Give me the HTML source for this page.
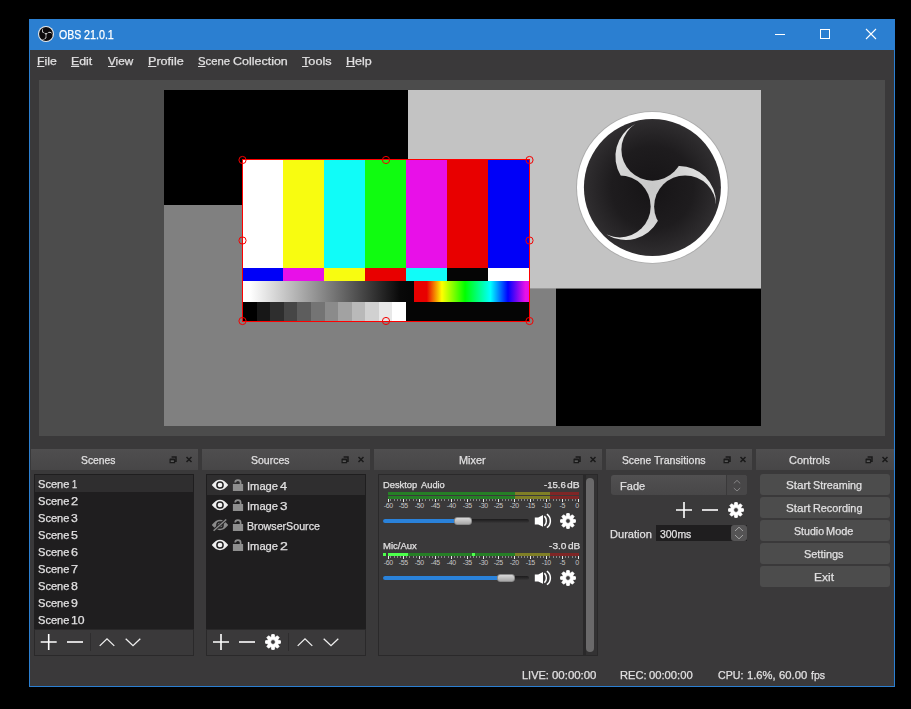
<!DOCTYPE html>
<html><head><meta charset="utf-8"><title>OBS</title>
<style>
*{margin:0;padding:0;box-sizing:border-box}
html,body{width:911px;height:709px;background:#000;overflow:hidden}
body{position:relative;font-family:"Liberation Sans",sans-serif;color:#e1e0e1;font-size:12px}
.a{position:absolute}
.t{position:absolute;white-space:pre;line-height:16px;height:16px;transform-origin:0 0;-webkit-text-stroke:0.25px}
.t u{text-decoration:underline;text-underline-offset:1px}
.dk{position:absolute;top:449px;height:21px;background:linear-gradient(180deg,#4f4e4f,#474647)}
.lb{position:absolute;background:#1f1e1f}
.tb{position:absolute;background:#3a393a;border:1px solid #2a292a}
.btn{position:absolute;left:760px;width:130px;height:21px;background:#4c4c4c;border-radius:3px}
svg{position:absolute;overflow:visible}

</style></head><body>
<div class="a" style="left:29px;top:19px;width:866px;height:668px;background:#3a393a;border:1px solid #2b7fd1"></div>
<div class="a" style="left:29px;top:19px;width:866px;height:31px;background:#2b7fd1"></div>
<svg style="left:38px;top:26px" width="16" height="16" viewBox="-76 -76 152 152"><circle r="76" fill="#e8e8e8"/><circle r="66" fill="#0c0a0c"/><mask id="m1" maskUnits="userSpaceOnUse" x="-80" y="-80" width="160" height="160"><path d="M-31.33 -11.47A36.50 36.50 0 0 1 -12.88 -65.34L25.60 -21.40A36.50 36.50 0 0 1 63.02 21.51L5.74 32.87A36.50 36.50 0 0 1 -50.14 43.82Z" fill="#fff"/><circle cx="0.00" cy="-37.80" r="30.40" fill="#000"/><circle cx="32.74" cy="18.90" r="30.40" fill="#000"/><circle cx="-32.74" cy="18.90" r="30.40" fill="#000"/></mask><rect x="-80" y="-80" width="160" height="160" fill="#f4f4f4" mask="url(#m1)"/></svg>
<svg style="left:776px;top:19px" width="118" height="31"><path d="M-1 15.5h10" stroke="#fff" stroke-width="1" fill="none"/><rect x="44.5" y="10.5" width="9" height="9" fill="none" stroke="#fff"/><path d="M90 10l10 10M100 10l-10 10" stroke="#fff" stroke-width="1.1" fill="none"/></svg>
<div class="a" style="left:39px;top:80px;width:846px;height:356px;background:#4c4c4c"></div>
<div class="a" style="left:164px;top:90px;width:597px;height:336px;background:#808080"></div>
<div class="a" style="left:164px;top:90px;width:244px;height:115px;background:#000"></div>
<div class="a" style="left:408px;top:90px;width:353px;height:198px;background:#c3c3c3"></div>
<div class="a" style="left:556px;top:288px;width:205px;height:138px;background:#000"></div>
<div class="a" style="left:408px;top:288px;width:148px;height:1px;background:#9a9a9a"></div>
<div class="a" style="left:556px;top:288px;width:205px;height:1px;background:#6c6c6c"></div>
<div class="a" style="left:242px;top:160px;width:41px;height:108px;background:#ffffff"></div>
<div class="a" style="left:283px;top:160px;width:41px;height:108px;background:#f8fc10"></div>
<div class="a" style="left:324px;top:160px;width:41px;height:108px;background:#10fcf8"></div>
<div class="a" style="left:365px;top:160px;width:41px;height:108px;background:#10fc10"></div>
<div class="a" style="left:406px;top:160px;width:41px;height:108px;background:#e810e8"></div>
<div class="a" style="left:447px;top:160px;width:41px;height:108px;background:#e80000"></div>
<div class="a" style="left:488px;top:160px;width:41px;height:108px;background:#0000f8"></div>
<div class="a" style="left:242px;top:268px;width:41px;height:13px;background:#0000f8"></div>
<div class="a" style="left:283px;top:268px;width:41px;height:13px;background:#e810e8"></div>
<div class="a" style="left:324px;top:268px;width:41px;height:13px;background:#f8fc10"></div>
<div class="a" style="left:365px;top:268px;width:41px;height:13px;background:#e80000"></div>
<div class="a" style="left:406px;top:268px;width:41px;height:13px;background:#10fcf8"></div>
<div class="a" style="left:447px;top:268px;width:41px;height:13px;background:#050505"></div>
<div class="a" style="left:488px;top:268px;width:41px;height:13px;background:#ffffff"></div>
<div class="a" style="left:243px;top:281px;width:287px;height:21px;background:#050505"></div>
<div class="a" style="left:243px;top:281px;width:171px;height:21px;background:linear-gradient(90deg,#fff 0%,#fff 4%,#080808 92%,#050505 100%)"></div>
<div class="a" style="left:414px;top:281px;width:116px;height:21px;background:linear-gradient(90deg,#e80000 0%,#e80000 11%,#ffff00 24%,#00ff00 44%,#00ffff 66%,#0000ff 81%,#e810e8 96%,#e810e8 100%)"></div>
<div class="a" style="left:243px;top:302px;width:287px;height:19px;background:#050505"></div>
<div class="a" style="left:243.00px;top:302px;width:13.88px;height:19px;background:rgb(0,0,0)"></div>
<div class="a" style="left:256.58px;top:302px;width:13.88px;height:19px;background:rgb(23,23,23)"></div>
<div class="a" style="left:270.17px;top:302px;width:13.88px;height:19px;background:rgb(46,46,46)"></div>
<div class="a" style="left:283.75px;top:302px;width:13.88px;height:19px;background:rgb(70,70,70)"></div>
<div class="a" style="left:297.33px;top:302px;width:13.88px;height:19px;background:rgb(93,93,93)"></div>
<div class="a" style="left:310.92px;top:302px;width:13.88px;height:19px;background:rgb(116,116,116)"></div>
<div class="a" style="left:324.50px;top:302px;width:13.88px;height:19px;background:rgb(139,139,139)"></div>
<div class="a" style="left:338.08px;top:302px;width:13.88px;height:19px;background:rgb(162,162,162)"></div>
<div class="a" style="left:351.67px;top:302px;width:13.88px;height:19px;background:rgb(185,185,185)"></div>
<div class="a" style="left:365.25px;top:302px;width:13.88px;height:19px;background:rgb(209,209,209)"></div>
<div class="a" style="left:378.83px;top:302px;width:13.88px;height:19px;background:rgb(232,232,232)"></div>
<div class="a" style="left:392.42px;top:302px;width:13.88px;height:19px;background:rgb(255,255,255)"></div>
<svg style="left:0;top:0" width="911" height="709"><rect x="242.5" y="159.5" width="287" height="162" fill="none" stroke="#ff0000" stroke-width="1"/><circle cx="242.5" cy="160" r="3.6" fill="none" stroke="#f40000" stroke-width="1"/><circle cx="386" cy="160" r="3.6" fill="none" stroke="#f40000" stroke-width="1"/><circle cx="529.5" cy="160" r="3.6" fill="none" stroke="#f40000" stroke-width="1"/><circle cx="242.5" cy="240.5" r="3.6" fill="none" stroke="#f40000" stroke-width="1"/><circle cx="529.5" cy="240.5" r="3.6" fill="none" stroke="#f40000" stroke-width="1"/><circle cx="242.5" cy="321" r="3.6" fill="none" stroke="#f40000" stroke-width="1"/><circle cx="386" cy="321" r="3.6" fill="none" stroke="#f40000" stroke-width="1"/><circle cx="529.5" cy="321" r="3.6" fill="none" stroke="#f40000" stroke-width="1"/></svg>
<svg style="left:0;top:0" width="911" height="709"><defs><radialGradient id="lg" cx="0.5" cy="0.5" r="0.5"><stop offset="0" stop-color="#161416"/><stop offset="0.6" stop-color="#1e1c1e"/><stop offset="1" stop-color="#302e30"/></radialGradient><radialGradient id="sg2" gradientUnits="userSpaceOnUse" cx="0" cy="0" r="68"><stop offset="0" stop-color="#c8c8c8"/><stop offset="0.5" stop-color="#d4d4d4"/><stop offset="1" stop-color="#ececec"/></radialGradient></defs><g transform="translate(652.4,187.5)"><circle r="76.3" fill="#aaaaaa"/><circle r="75.4" fill="#ffffff"/><circle r="68.5" fill="url(#lg)"/><mask id="m2" maskUnits="userSpaceOnUse" x="-80" y="-80" width="160" height="160"><path d="M-31.72 -12.08A36.50 36.50 0 0 1 -18.05 -63.01L26.32 -21.42A36.50 36.50 0 0 1 63.59 15.88L5.39 33.51A36.50 36.50 0 0 1 -45.54 47.13Z" fill="#fff"/><circle cx="0.00" cy="-37.80" r="31.00" fill="#000"/><circle cx="32.74" cy="18.90" r="31.00" fill="#000"/><circle cx="-32.74" cy="18.90" r="31.00" fill="#000"/></mask><rect x="-80" y="-80" width="160" height="160" fill="url(#sg2)" mask="url(#m2)"/></g></svg>
<div class="dk" style="left:31px;width:167px"></div>
<svg style="left:0;top:0" width="911" height="709"><g fill="none" stroke="#1a1a1a" stroke-width="1.2"><path d="M171.6 457h4.4v4.2h-1.2" stroke-width="1.5"/><path d="M170.1 459.4h4.4v3.3h-4.4z" fill="#5c5c5c"/><path d="M170.1 459.5h4.4" stroke-width="1.7"/><path d="M186.5 457l5 5M191.5 457l-5 5" stroke-width="1.5"/></g></svg>
<div class="dk" style="left:202px;width:168px"></div>
<svg style="left:0;top:0" width="911" height="709"><g fill="none" stroke="#1a1a1a" stroke-width="1.2"><path d="M343.6 457h4.4v4.2h-1.2" stroke-width="1.5"/><path d="M342.1 459.4h4.4v3.3h-4.4z" fill="#5c5c5c"/><path d="M342.1 459.5h4.4" stroke-width="1.7"/><path d="M358.5 457l5 5M363.5 457l-5 5" stroke-width="1.5"/></g></svg>
<div class="dk" style="left:374px;width:228px"></div>
<svg style="left:0;top:0" width="911" height="709"><g fill="none" stroke="#1a1a1a" stroke-width="1.2"><path d="M575.6 457h4.4v4.2h-1.2" stroke-width="1.5"/><path d="M574.1 459.4h4.4v3.3h-4.4z" fill="#5c5c5c"/><path d="M574.1 459.5h4.4" stroke-width="1.7"/><path d="M590.5 457l5 5M595.5 457l-5 5" stroke-width="1.5"/></g></svg>
<div class="dk" style="left:606px;width:146px"></div>
<svg style="left:0;top:0" width="911" height="709"><g fill="none" stroke="#1a1a1a" stroke-width="1.2"><path d="M725.6 457h4.4v4.2h-1.2" stroke-width="1.5"/><path d="M724.1 459.4h4.4v3.3h-4.4z" fill="#5c5c5c"/><path d="M724.1 459.5h4.4" stroke-width="1.7"/><path d="M740.5 457l5 5M745.5 457l-5 5" stroke-width="1.5"/></g></svg>
<div class="dk" style="left:756px;width:138px"></div>
<svg style="left:0;top:0" width="911" height="709"><g fill="none" stroke="#1a1a1a" stroke-width="1.2"><path d="M867.6 457h4.4v4.2h-1.2" stroke-width="1.5"/><path d="M866.1 459.4h4.4v3.3h-4.4z" fill="#5c5c5c"/><path d="M866.1 459.5h4.4" stroke-width="1.7"/><path d="M882.5 457l5 5M887.5 457l-5 5" stroke-width="1.5"/></g></svg>
<div class="lb" style="left:34px;top:474px;width:160px;height:155px"></div>
<div class="a" style="left:35px;top:475px;width:158px;height:17px;background:#2f2e2f"></div>
<div class="tb" style="left:34px;top:629px;width:160px;height:27px"></div>
<div class="lb" style="left:206px;top:474px;width:160px;height:155px"></div>
<div class="a" style="left:207px;top:475px;width:158px;height:20px;background:#2f2e2f"></div>
<div class="tb" style="left:206px;top:629px;width:160px;height:27px"></div>
<svg style="left:0;top:0" width="911" height="709"><path d="M40.7 642h16M48.7 634v16" stroke="#fff" stroke-width="1.6" fill="none"/><path d="M67 642h16" stroke="#fff" stroke-width="1.6" fill="none"/><path d="M90.5 633v18" stroke="#2e2d2e" stroke-width="1"/><path d="M99.7 645.9l7.3 -7 7.3 7" stroke="#f0f0f0" stroke-width="1.3" fill="none"/><path d="M125.7 638.7l7.3 7 7.3 -7" stroke="#f0f0f0" stroke-width="1.3" fill="none"/><path d="M213 642h16M221 634v16" stroke="#fff" stroke-width="1.6" fill="none"/><path d="M239 642h16" stroke="#fff" stroke-width="1.6" fill="none"/><path d="M271.25 636.89L271.75 634.50L274.25 634.50L274.75 636.89L275.38 637.15L277.42 635.82L279.18 637.58L277.85 639.62L278.11 640.25L280.50 640.75L280.50 643.25L278.11 643.75L277.85 644.38L279.18 646.42L277.42 648.18L275.38 646.85L274.75 647.11L274.25 649.50L271.75 649.50L271.25 647.11L270.62 646.85L268.58 648.18L266.82 646.42L268.15 644.38L267.89 643.75L265.50 643.25L265.50 640.75L267.89 640.25L268.15 639.62L266.82 637.58L268.58 635.82L270.62 637.15ZM270.60 642.00a2.40 2.40 0 1 0 4.80 0a2.40 2.40 0 1 0 -4.80 0Z" fill="#fff" fill-rule="evenodd" stroke="#fff" stroke-width="0.8" stroke-linejoin="round"/><path d="M288.5 633v18" stroke="#2e2d2e" stroke-width="1"/><path d="M297.7 645.9l7.3 -7 7.3 7" stroke="#f0f0f0" stroke-width="1.3" fill="none"/><path d="M323.7 638.7l7.3 7 7.3 -7" stroke="#f0f0f0" stroke-width="1.3" fill="none"/><path d="M676 510h16M684 502v16" stroke="#fff" stroke-width="1.6" fill="none"/><path d="M702 510h16" stroke="#fff" stroke-width="1.6" fill="none"/><path d="M734.25 504.89L734.75 502.50L737.25 502.50L737.75 504.89L738.38 505.15L740.42 503.82L742.18 505.58L740.85 507.62L741.11 508.25L743.50 508.75L743.50 511.25L741.11 511.75L740.85 512.38L742.18 514.42L740.42 516.18L738.38 514.85L737.75 515.11L737.25 517.50L734.75 517.50L734.25 515.11L733.62 514.85L731.58 516.18L729.82 514.42L731.15 512.38L730.89 511.75L728.50 511.25L728.50 508.75L730.89 508.25L731.15 507.62L729.82 505.58L731.58 503.82L733.62 505.15ZM733.60 510.00a2.40 2.40 0 1 0 4.80 0a2.40 2.40 0 1 0 -4.80 0Z" fill="#fff" fill-rule="evenodd" stroke="#fff" stroke-width="0.8" stroke-linejoin="round"/></svg>
<svg style="left:0;top:0" width="911" height="709"><path d="M211.8 485q8.2 -10.4 16.4 0q-8.2 10.4 -16.4 0z" fill="#f0f0f0"/><circle cx="220" cy="485" r="3.1" fill="none" stroke="#242324" stroke-width="1.5"/><rect x="232.9" y="484" width="10.2" height="7" fill="#8e8e8e"/><path d="M235.2 482.5a2.7 2.4 0 0 1 5.4 0v2" fill="none" stroke="#8e8e8e" stroke-width="1.7"/><path d="M211.8 505q8.2 -10.4 16.4 0q-8.2 10.4 -16.4 0z" fill="#f0f0f0"/><circle cx="220" cy="505" r="3.1" fill="none" stroke="#242324" stroke-width="1.5"/><rect x="232.9" y="504" width="10.2" height="7" fill="#8e8e8e"/><path d="M235.2 502.5a2.7 2.4 0 0 1 5.4 0v2" fill="none" stroke="#8e8e8e" stroke-width="1.7"/><path d="M211.8 525q8.2 -10.4 16.4 0q-8.2 10.4 -16.4 0z" fill="#8a8a8a"/><circle cx="220" cy="525" r="3.1" fill="none" stroke="#242324" stroke-width="1.5"/><path d="M213.6 530.8L226.2 519.4" stroke="#242324" stroke-width="3.2"/><path d="M213.6 530.8L226.2 519.4" stroke="#8a8a8a" stroke-width="1.4"/><rect x="232.9" y="524" width="10.2" height="7" fill="#8e8e8e"/><path d="M235.2 522.5a2.7 2.4 0 0 1 5.4 0v2" fill="none" stroke="#8e8e8e" stroke-width="1.7"/><path d="M211.8 545q8.2 -10.4 16.4 0q-8.2 10.4 -16.4 0z" fill="#f0f0f0"/><circle cx="220" cy="545" r="3.1" fill="none" stroke="#242324" stroke-width="1.5"/><rect x="232.9" y="544" width="10.2" height="7" fill="#8e8e8e"/><path d="M235.2 542.5a2.7 2.4 0 0 1 5.4 0v2" fill="none" stroke="#8e8e8e" stroke-width="1.7"/></svg>
<div class="a" style="left:378px;top:474px;width:220px;height:182px;border:1px solid #2a292a;background:#3a393a"></div>
<div class="a" style="left:583px;top:475px;width:14px;height:180px;background:linear-gradient(90deg,#2a292a 0,#2a292a 3px,#333233 3px,#333233 100%)"></div>
<div class="a" style="left:586px;top:478px;width:8px;height:174px;border-radius:4px;background:#6a696a"></div>
<svg style="left:0;top:0" width="911" height="709" shape-rendering="crispEdges"><rect x="388.00" y="492" width="127.00" height="3" fill="#267f26"/><rect x="515.00" y="492" width="35.00" height="3" fill="#7f7f26"/><rect x="550.00" y="492" width="29.00" height="3" fill="#7f2626"/><rect x="388.00" y="496" width="127.00" height="3" fill="#267f26"/><rect x="515.00" y="496" width="35.00" height="3" fill="#7f7f26"/><rect x="550.00" y="496" width="29.00" height="3" fill="#7f2626"/><rect x="388.00" y="553" width="127.00" height="3" fill="#267f26"/><rect x="515.00" y="553" width="35.00" height="3" fill="#7f7f26"/><rect x="550.00" y="553" width="29.00" height="3" fill="#7f2626"/><rect x="383.00" y="553" width="3.00" height="3" fill="#4cff4c"/><rect x="388.00" y="553" width="20.00" height="3" fill="#4cff4c"/><rect x="472.00" y="553" width="3.00" height="3" fill="#4cff4c"/><rect x="388" y="499" width="1" height="3" fill="#e8e8e8"/><rect x="390" y="499" width="1" height="2" fill="#8a8a8a"/><rect x="394" y="499" width="1" height="2" fill="#8a8a8a"/><rect x="397" y="499" width="1" height="2" fill="#8a8a8a"/><rect x="400" y="499" width="1" height="2" fill="#8a8a8a"/><rect x="403" y="499" width="1" height="3" fill="#e8e8e8"/><rect x="406" y="499" width="1" height="2" fill="#8a8a8a"/><rect x="409" y="499" width="1" height="2" fill="#8a8a8a"/><rect x="413" y="499" width="1" height="2" fill="#8a8a8a"/><rect x="416" y="499" width="1" height="2" fill="#8a8a8a"/><rect x="419" y="499" width="1" height="3" fill="#e8e8e8"/><rect x="422" y="499" width="1" height="2" fill="#8a8a8a"/><rect x="425" y="499" width="1" height="2" fill="#8a8a8a"/><rect x="429" y="499" width="1" height="2" fill="#8a8a8a"/><rect x="432" y="499" width="1" height="2" fill="#8a8a8a"/><rect x="435" y="499" width="1" height="3" fill="#e8e8e8"/><rect x="438" y="499" width="1" height="2" fill="#8a8a8a"/><rect x="441" y="499" width="1" height="2" fill="#8a8a8a"/><rect x="444" y="499" width="1" height="2" fill="#8a8a8a"/><rect x="448" y="499" width="1" height="2" fill="#8a8a8a"/><rect x="451" y="499" width="1" height="3" fill="#e8e8e8"/><rect x="454" y="499" width="1" height="2" fill="#8a8a8a"/><rect x="457" y="499" width="1" height="2" fill="#8a8a8a"/><rect x="460" y="499" width="1" height="2" fill="#8a8a8a"/><rect x="464" y="499" width="1" height="2" fill="#8a8a8a"/><rect x="467" y="499" width="1" height="3" fill="#e8e8e8"/><rect x="470" y="499" width="1" height="2" fill="#8a8a8a"/><rect x="473" y="499" width="1" height="2" fill="#8a8a8a"/><rect x="476" y="499" width="1" height="2" fill="#8a8a8a"/><rect x="479" y="499" width="1" height="2" fill="#8a8a8a"/><rect x="483" y="499" width="1" height="3" fill="#e8e8e8"/><rect x="486" y="499" width="1" height="2" fill="#8a8a8a"/><rect x="489" y="499" width="1" height="2" fill="#8a8a8a"/><rect x="492" y="499" width="1" height="2" fill="#8a8a8a"/><rect x="495" y="499" width="1" height="2" fill="#8a8a8a"/><rect x="498" y="499" width="1" height="3" fill="#e8e8e8"/><rect x="502" y="499" width="1" height="2" fill="#8a8a8a"/><rect x="505" y="499" width="1" height="2" fill="#8a8a8a"/><rect x="508" y="499" width="1" height="2" fill="#8a8a8a"/><rect x="511" y="499" width="1" height="2" fill="#8a8a8a"/><rect x="514" y="499" width="1" height="3" fill="#e8e8e8"/><rect x="518" y="499" width="1" height="2" fill="#8a8a8a"/><rect x="521" y="499" width="1" height="2" fill="#8a8a8a"/><rect x="524" y="499" width="1" height="2" fill="#8a8a8a"/><rect x="527" y="499" width="1" height="2" fill="#8a8a8a"/><rect x="530" y="499" width="1" height="3" fill="#e8e8e8"/><rect x="533" y="499" width="1" height="2" fill="#8a8a8a"/><rect x="537" y="499" width="1" height="2" fill="#8a8a8a"/><rect x="540" y="499" width="1" height="2" fill="#8a8a8a"/><rect x="543" y="499" width="1" height="2" fill="#8a8a8a"/><rect x="546" y="499" width="1" height="3" fill="#e8e8e8"/><rect x="549" y="499" width="1" height="2" fill="#8a8a8a"/><rect x="553" y="499" width="1" height="2" fill="#8a8a8a"/><rect x="556" y="499" width="1" height="2" fill="#8a8a8a"/><rect x="559" y="499" width="1" height="2" fill="#8a8a8a"/><rect x="562" y="499" width="1" height="3" fill="#e8e8e8"/><rect x="565" y="499" width="1" height="2" fill="#8a8a8a"/><rect x="568" y="499" width="1" height="2" fill="#8a8a8a"/><rect x="572" y="499" width="1" height="2" fill="#8a8a8a"/><rect x="575" y="499" width="1" height="2" fill="#8a8a8a"/><rect x="578" y="499" width="1" height="3" fill="#e8e8e8"/><rect x="388" y="556" width="1" height="3" fill="#e8e8e8"/><rect x="390" y="556" width="1" height="2" fill="#8a8a8a"/><rect x="394" y="556" width="1" height="2" fill="#8a8a8a"/><rect x="397" y="556" width="1" height="2" fill="#8a8a8a"/><rect x="400" y="556" width="1" height="2" fill="#8a8a8a"/><rect x="403" y="556" width="1" height="3" fill="#e8e8e8"/><rect x="406" y="556" width="1" height="2" fill="#8a8a8a"/><rect x="409" y="556" width="1" height="2" fill="#8a8a8a"/><rect x="413" y="556" width="1" height="2" fill="#8a8a8a"/><rect x="416" y="556" width="1" height="2" fill="#8a8a8a"/><rect x="419" y="556" width="1" height="3" fill="#e8e8e8"/><rect x="422" y="556" width="1" height="2" fill="#8a8a8a"/><rect x="425" y="556" width="1" height="2" fill="#8a8a8a"/><rect x="429" y="556" width="1" height="2" fill="#8a8a8a"/><rect x="432" y="556" width="1" height="2" fill="#8a8a8a"/><rect x="435" y="556" width="1" height="3" fill="#e8e8e8"/><rect x="438" y="556" width="1" height="2" fill="#8a8a8a"/><rect x="441" y="556" width="1" height="2" fill="#8a8a8a"/><rect x="444" y="556" width="1" height="2" fill="#8a8a8a"/><rect x="448" y="556" width="1" height="2" fill="#8a8a8a"/><rect x="451" y="556" width="1" height="3" fill="#e8e8e8"/><rect x="454" y="556" width="1" height="2" fill="#8a8a8a"/><rect x="457" y="556" width="1" height="2" fill="#8a8a8a"/><rect x="460" y="556" width="1" height="2" fill="#8a8a8a"/><rect x="464" y="556" width="1" height="2" fill="#8a8a8a"/><rect x="467" y="556" width="1" height="3" fill="#e8e8e8"/><rect x="470" y="556" width="1" height="2" fill="#8a8a8a"/><rect x="473" y="556" width="1" height="2" fill="#8a8a8a"/><rect x="476" y="556" width="1" height="2" fill="#8a8a8a"/><rect x="479" y="556" width="1" height="2" fill="#8a8a8a"/><rect x="483" y="556" width="1" height="3" fill="#e8e8e8"/><rect x="486" y="556" width="1" height="2" fill="#8a8a8a"/><rect x="489" y="556" width="1" height="2" fill="#8a8a8a"/><rect x="492" y="556" width="1" height="2" fill="#8a8a8a"/><rect x="495" y="556" width="1" height="2" fill="#8a8a8a"/><rect x="498" y="556" width="1" height="3" fill="#e8e8e8"/><rect x="502" y="556" width="1" height="2" fill="#8a8a8a"/><rect x="505" y="556" width="1" height="2" fill="#8a8a8a"/><rect x="508" y="556" width="1" height="2" fill="#8a8a8a"/><rect x="511" y="556" width="1" height="2" fill="#8a8a8a"/><rect x="514" y="556" width="1" height="3" fill="#e8e8e8"/><rect x="518" y="556" width="1" height="2" fill="#8a8a8a"/><rect x="521" y="556" width="1" height="2" fill="#8a8a8a"/><rect x="524" y="556" width="1" height="2" fill="#8a8a8a"/><rect x="527" y="556" width="1" height="2" fill="#8a8a8a"/><rect x="530" y="556" width="1" height="3" fill="#e8e8e8"/><rect x="533" y="556" width="1" height="2" fill="#8a8a8a"/><rect x="537" y="556" width="1" height="2" fill="#8a8a8a"/><rect x="540" y="556" width="1" height="2" fill="#8a8a8a"/><rect x="543" y="556" width="1" height="2" fill="#8a8a8a"/><rect x="546" y="556" width="1" height="3" fill="#e8e8e8"/><rect x="549" y="556" width="1" height="2" fill="#8a8a8a"/><rect x="553" y="556" width="1" height="2" fill="#8a8a8a"/><rect x="556" y="556" width="1" height="2" fill="#8a8a8a"/><rect x="559" y="556" width="1" height="2" fill="#8a8a8a"/><rect x="562" y="556" width="1" height="3" fill="#e8e8e8"/><rect x="565" y="556" width="1" height="2" fill="#8a8a8a"/><rect x="568" y="556" width="1" height="2" fill="#8a8a8a"/><rect x="572" y="556" width="1" height="2" fill="#8a8a8a"/><rect x="575" y="556" width="1" height="2" fill="#8a8a8a"/><rect x="578" y="556" width="1" height="3" fill="#e8e8e8"/></svg>
<span class="t" style="left:378.3px;top:501.5px;width:20px;text-align:center;font-size:7px;line-height:8px;height:8px;letter-spacing:-0.35px;color:#c6c6c6;-webkit-text-stroke:0">-60</span><span class="t" style="left:393.3px;top:501.5px;width:20px;text-align:center;font-size:7px;line-height:8px;height:8px;letter-spacing:-0.35px;color:#c6c6c6;-webkit-text-stroke:0">-55</span><span class="t" style="left:409.3px;top:501.5px;width:20px;text-align:center;font-size:7px;line-height:8px;height:8px;letter-spacing:-0.35px;color:#c6c6c6;-webkit-text-stroke:0">-50</span><span class="t" style="left:425.3px;top:501.5px;width:20px;text-align:center;font-size:7px;line-height:8px;height:8px;letter-spacing:-0.35px;color:#c6c6c6;-webkit-text-stroke:0">-45</span><span class="t" style="left:441.3px;top:501.5px;width:20px;text-align:center;font-size:7px;line-height:8px;height:8px;letter-spacing:-0.35px;color:#c6c6c6;-webkit-text-stroke:0">-40</span><span class="t" style="left:457.3px;top:501.5px;width:20px;text-align:center;font-size:7px;line-height:8px;height:8px;letter-spacing:-0.35px;color:#c6c6c6;-webkit-text-stroke:0">-35</span><span class="t" style="left:473.3px;top:501.5px;width:20px;text-align:center;font-size:7px;line-height:8px;height:8px;letter-spacing:-0.35px;color:#c6c6c6;-webkit-text-stroke:0">-30</span><span class="t" style="left:488.3px;top:501.5px;width:20px;text-align:center;font-size:7px;line-height:8px;height:8px;letter-spacing:-0.35px;color:#c6c6c6;-webkit-text-stroke:0">-25</span><span class="t" style="left:504.3px;top:501.5px;width:20px;text-align:center;font-size:7px;line-height:8px;height:8px;letter-spacing:-0.35px;color:#c6c6c6;-webkit-text-stroke:0">-20</span><span class="t" style="left:520.3px;top:501.5px;width:20px;text-align:center;font-size:7px;line-height:8px;height:8px;letter-spacing:-0.35px;color:#c6c6c6;-webkit-text-stroke:0">-15</span><span class="t" style="left:536.3px;top:501.5px;width:20px;text-align:center;font-size:7px;line-height:8px;height:8px;letter-spacing:-0.35px;color:#c6c6c6;-webkit-text-stroke:0">-10</span><span class="t" style="left:552.3px;top:501.5px;width:20px;text-align:center;font-size:7px;line-height:8px;height:8px;letter-spacing:-0.35px;color:#c6c6c6;-webkit-text-stroke:0">-5</span><span class="t" style="left:558.9px;top:501.5px;width:20px;text-align:right;font-size:7px;line-height:8px;height:8px;letter-spacing:-0.2px;color:#c6c6c6;-webkit-text-stroke:0">0</span>
<span class="t" style="left:378.3px;top:558.5px;width:20px;text-align:center;font-size:7px;line-height:8px;height:8px;letter-spacing:-0.35px;color:#c6c6c6;-webkit-text-stroke:0">-60</span><span class="t" style="left:393.3px;top:558.5px;width:20px;text-align:center;font-size:7px;line-height:8px;height:8px;letter-spacing:-0.35px;color:#c6c6c6;-webkit-text-stroke:0">-55</span><span class="t" style="left:409.3px;top:558.5px;width:20px;text-align:center;font-size:7px;line-height:8px;height:8px;letter-spacing:-0.35px;color:#c6c6c6;-webkit-text-stroke:0">-50</span><span class="t" style="left:425.3px;top:558.5px;width:20px;text-align:center;font-size:7px;line-height:8px;height:8px;letter-spacing:-0.35px;color:#c6c6c6;-webkit-text-stroke:0">-45</span><span class="t" style="left:441.3px;top:558.5px;width:20px;text-align:center;font-size:7px;line-height:8px;height:8px;letter-spacing:-0.35px;color:#c6c6c6;-webkit-text-stroke:0">-40</span><span class="t" style="left:457.3px;top:558.5px;width:20px;text-align:center;font-size:7px;line-height:8px;height:8px;letter-spacing:-0.35px;color:#c6c6c6;-webkit-text-stroke:0">-35</span><span class="t" style="left:473.3px;top:558.5px;width:20px;text-align:center;font-size:7px;line-height:8px;height:8px;letter-spacing:-0.35px;color:#c6c6c6;-webkit-text-stroke:0">-30</span><span class="t" style="left:488.3px;top:558.5px;width:20px;text-align:center;font-size:7px;line-height:8px;height:8px;letter-spacing:-0.35px;color:#c6c6c6;-webkit-text-stroke:0">-25</span><span class="t" style="left:504.3px;top:558.5px;width:20px;text-align:center;font-size:7px;line-height:8px;height:8px;letter-spacing:-0.35px;color:#c6c6c6;-webkit-text-stroke:0">-20</span><span class="t" style="left:520.3px;top:558.5px;width:20px;text-align:center;font-size:7px;line-height:8px;height:8px;letter-spacing:-0.35px;color:#c6c6c6;-webkit-text-stroke:0">-15</span><span class="t" style="left:536.3px;top:558.5px;width:20px;text-align:center;font-size:7px;line-height:8px;height:8px;letter-spacing:-0.35px;color:#c6c6c6;-webkit-text-stroke:0">-10</span><span class="t" style="left:552.3px;top:558.5px;width:20px;text-align:center;font-size:7px;line-height:8px;height:8px;letter-spacing:-0.35px;color:#c6c6c6;-webkit-text-stroke:0">-5</span><span class="t" style="left:558.9px;top:558.5px;width:20px;text-align:right;font-size:7px;line-height:8px;height:8px;letter-spacing:-0.2px;color:#c6c6c6;-webkit-text-stroke:0">0</span>
<div class="a" style="left:383px;top:518.5px;width:146px;height:4px;border-radius:2px;background:linear-gradient(180deg,#1c1b1c,#2c2b2c 60%,#383738)"></div><div class="a" style="left:383px;top:519px;width:74px;height:4px;border-radius:2px;background:#2a82da"></div><div class="a" style="left:454px;top:517px;width:18px;height:8px;border-radius:3px;background:linear-gradient(180deg,#d8d8d8,#a8a8a8);border:0.5px solid #8a8a8a"></div>
<div class="a" style="left:383px;top:575.5px;width:146px;height:4px;border-radius:2px;background:linear-gradient(180deg,#1c1b1c,#2c2b2c 60%,#383738)"></div><div class="a" style="left:383px;top:576px;width:117px;height:4px;border-radius:2px;background:#2a82da"></div><div class="a" style="left:497px;top:574px;width:18px;height:8px;border-radius:3px;background:linear-gradient(180deg,#d8d8d8,#a8a8a8);border:0.5px solid #8a8a8a"></div>
<svg style="left:0;top:0" width="911" height="709"><path d="M534.8 517.5h3.4l4.8 -2.4v11.6l-4.8 -2.1h-3.4z" fill="#fff"/><path d="M544.4 516.1a6.8 6.8 0 0 1 0 9.6" fill="none" stroke="#fff" stroke-width="1.5"/><path d="M546.9 514.1a8.4 8.4 0 0 1 0 13.6" fill="none" stroke="#fff" stroke-width="1.5"/><path d="M534.8 574.5h3.4l4.8 -2.4v11.6l-4.8 -2.1h-3.4z" fill="#fff"/><path d="M544.4 573.1a6.8 6.8 0 0 1 0 9.6" fill="none" stroke="#fff" stroke-width="1.5"/><path d="M546.9 571.1a8.4 8.4 0 0 1 0 13.6" fill="none" stroke="#fff" stroke-width="1.5"/><path d="M566.25 515.89L566.75 513.50L569.25 513.50L569.75 515.89L570.38 516.15L572.42 514.82L574.18 516.58L572.85 518.62L573.11 519.25L575.50 519.75L575.50 522.25L573.11 522.75L572.85 523.38L574.18 525.42L572.42 527.18L570.38 525.85L569.75 526.11L569.25 528.50L566.75 528.50L566.25 526.11L565.62 525.85L563.58 527.18L561.82 525.42L563.15 523.38L562.89 522.75L560.50 522.25L560.50 519.75L562.89 519.25L563.15 518.62L561.82 516.58L563.58 514.82L565.62 516.15ZM565.60 521.00a2.40 2.40 0 1 0 4.80 0a2.40 2.40 0 1 0 -4.80 0Z" fill="#fff" fill-rule="evenodd" stroke="#fff" stroke-width="0.8" stroke-linejoin="round"/><path d="M566.25 572.89L566.75 570.50L569.25 570.50L569.75 572.89L570.38 573.15L572.42 571.82L574.18 573.58L572.85 575.62L573.11 576.25L575.50 576.75L575.50 579.25L573.11 579.75L572.85 580.38L574.18 582.42L572.42 584.18L570.38 582.85L569.75 583.11L569.25 585.50L566.75 585.50L566.25 583.11L565.62 582.85L563.58 584.18L561.82 582.42L563.15 580.38L562.89 579.75L560.50 579.25L560.50 576.75L562.89 576.25L563.15 575.62L561.82 573.58L563.58 571.82L565.62 573.15ZM565.60 578.00a2.40 2.40 0 1 0 4.80 0a2.40 2.40 0 1 0 -4.80 0Z" fill="#fff" fill-rule="evenodd" stroke="#fff" stroke-width="0.8" stroke-linejoin="round"/></svg>
<div class="a" style="left:611px;top:475px;width:136px;height:20px;border-radius:3px;background:linear-gradient(180deg,#515051,#484748)"></div>
<div class="a" style="left:726px;top:475px;width:21px;height:20px;border-radius:0 3px 3px 0;background:#484748;border-left:1px solid #3a393a"></div>
<div class="a" style="left:656px;top:525px;width:91px;height:16px;background:#1f1e1f"></div>
<div class="a" style="left:731px;top:525px;width:16px;height:16px;border-radius:3px;background:#555455"></div>
<svg style="left:0;top:0" width="911" height="709"><g fill="none" stroke="#868586" stroke-width="1"><path d="M733.8 483.4l3.2 -3 3.2 3M733.8 488l3.2 3 3.2 -3"/><path d="M735 531l4 -3.8 4 3.8M735 535l4 3.8 4 -3.8" stroke="#a4a4a4"/></g></svg>
<div class="btn" style="top:474px"></div>
<div class="btn" style="top:497px"></div>
<div class="btn" style="top:520px"></div>
<div class="btn" style="top:543px"></div>
<div class="btn" style="top:566px"></div>
<span class="t" style="left:59.27px;top:26.84px;font-size:12px;transform:scaleX(0.8802);color:#ffffff">OBS</span>
<span class="t" style="left:83.66px;top:26.84px;font-size:12px;transform:scaleX(0.8944);color:#ffffff">21.0.1</span>
<span class="t" style="left:36.94px;top:53.02px;font-size:11.5px;transform:scaleX(1.0643);color:#e1e0e1"><u>F</u>ile</span>
<span class="t" style="left:70.93px;top:53.02px;font-size:11.5px;transform:scaleX(1.0745);color:#e1e0e1"><u>E</u>dit</span>
<span class="t" style="left:107.80px;top:53.02px;font-size:11.5px;transform:scaleX(1.0202);color:#e1e0e1"><u>V</u>iew</span>
<span class="t" style="left:147.91px;top:53.02px;font-size:11.5px;transform:scaleX(1.0962);color:#e1e0e1"><u>P</u>rofile</span>
<span class="t" style="left:198.21px;top:53.02px;font-size:11.5px;transform:scaleX(0.9810);color:#e1e0e1"><u>S</u>cene</span>
<span class="t" style="left:233.05px;top:53.02px;font-size:11.5px;transform:scaleX(1.0854);color:#e1e0e1">Collection</span>
<span class="t" style="left:301.68px;top:53.02px;font-size:11.5px;transform:scaleX(1.1069);color:#e1e0e1"><u>T</u>ools</span>
<span class="t" style="left:346.22px;top:53.02px;font-size:11.5px;transform:scaleX(1.0897);color:#e1e0e1"><u>H</u>elp</span>
<span class="t" style="left:81.05px;top:452.02px;font-size:11.5px;transform:scaleX(0.8984);color:#e1e0e1">Scenes</span>
<span class="t" style="left:251.24px;top:452.02px;font-size:11.5px;transform:scaleX(0.9128);color:#e1e0e1">Sources</span>
<span class="t" style="left:458.65px;top:452.02px;font-size:11.5px;transform:scaleX(0.9481);color:#e1e0e1">Mixer</span>
<span class="t" style="left:622.15px;top:452.02px;font-size:11.5px;transform:scaleX(0.8956);color:#e1e0e1">Scene</span>
<span class="t" style="left:654.31px;top:452.02px;font-size:11.5px;transform:scaleX(0.9257);color:#e1e0e1">Transitions</span>
<span class="t" style="left:788.93px;top:452.02px;font-size:11.5px;transform:scaleX(0.9545);color:#e1e0e1">Controls</span>
<span class="t" style="left:38.02px;top:476.02px;font-size:11.5px;transform:scaleX(0.9620);color:#e1e0e1">Scene</span>
<span class="t" style="left:72.48px;top:476.02px;font-size:11.5px;transform:scaleX(0.7959);color:#e1e0e1">1</span>
<span class="t" style="left:38.02px;top:493.02px;font-size:11.5px;transform:scaleX(0.9620);color:#e1e0e1">Scene</span>
<span class="t" style="left:71.23px;top:493.02px;font-size:11.5px;transform:scaleX(1.1154);color:#e1e0e1">2</span>
<span class="t" style="left:38.02px;top:510.02px;font-size:11.5px;transform:scaleX(0.9620);color:#e1e0e1">Scene</span>
<span class="t" style="left:71.48px;top:510.02px;font-size:11.5px;transform:scaleX(1.0545);color:#e1e0e1">3</span>
<span class="t" style="left:38.02px;top:527.02px;font-size:11.5px;transform:scaleX(0.9620);color:#e1e0e1">Scene</span>
<span class="t" style="left:71.36px;top:527.02px;font-size:11.5px;transform:scaleX(1.0741);color:#e1e0e1">5</span>
<span class="t" style="left:38.02px;top:544.02px;font-size:11.5px;transform:scaleX(0.9620);color:#e1e0e1">Scene</span>
<span class="t" style="left:71.24px;top:544.02px;font-size:11.5px;transform:scaleX(1.0943);color:#e1e0e1">6</span>
<span class="t" style="left:38.02px;top:561.02px;font-size:11.5px;transform:scaleX(0.9620);color:#e1e0e1">Scene</span>
<span class="t" style="left:71.23px;top:561.02px;font-size:11.5px;transform:scaleX(1.1154);color:#e1e0e1">7</span>
<span class="t" style="left:38.02px;top:578.02px;font-size:11.5px;transform:scaleX(0.9620);color:#e1e0e1">Scene</span>
<span class="t" style="left:71.36px;top:578.02px;font-size:11.5px;transform:scaleX(1.0741);color:#e1e0e1">8</span>
<span class="t" style="left:38.02px;top:595.02px;font-size:11.5px;transform:scaleX(0.9620);color:#e1e0e1">Scene</span>
<span class="t" style="left:71.36px;top:595.02px;font-size:11.5px;transform:scaleX(1.0741);color:#e1e0e1">9</span>
<span class="t" style="left:38.02px;top:612.02px;font-size:11.5px;transform:scaleX(0.9620);color:#e1e0e1">Scene</span>
<span class="t" style="left:71.25px;top:612.02px;font-size:11.5px;transform:scaleX(1.0609);color:#e1e0e1">10</span>
<span class="t" style="left:246.63px;top:478.02px;font-size:11.5px;transform:scaleX(0.9704);color:#e1e0e1">Image</span>
<span class="t" style="left:280.37px;top:478.02px;font-size:11.5px;transform:scaleX(1.1034);color:#e1e0e1">4</span>
<span class="t" style="left:246.63px;top:498.02px;font-size:11.5px;transform:scaleX(0.9704);color:#e1e0e1">Image</span>
<span class="t" style="left:280.23px;top:498.02px;font-size:11.5px;transform:scaleX(1.1636);color:#e1e0e1">3</span>
<span class="t" style="left:246.87px;top:518.02px;font-size:11.5px;transform:scaleX(0.9275);color:#e1e0e1">BrowserSource</span>
<span class="t" style="left:246.63px;top:538.02px;font-size:11.5px;transform:scaleX(0.9704);color:#e1e0e1">Image</span>
<span class="t" style="left:279.96px;top:538.02px;font-size:11.5px;transform:scaleX(1.2308);color:#e1e0e1">2</span>
<span class="t" style="left:382.61px;top:476.71px;font-size:9.5px;transform:scaleX(0.9822);color:#e1e0e1">Desktop</span>
<span class="t" style="left:420.90px;top:476.71px;font-size:9.5px;transform:scaleX(0.9791);color:#e1e0e1">Audio</span>
<span class="t" style="left:543.80px;top:476.71px;font-size:9.5px;transform:scaleX(1.0096);color:#e1e0e1">-15.6</span>
<span class="t" style="left:567.37px;top:476.71px;font-size:9.5px;transform:scaleX(1.0841);color:#e1e0e1">dB</span>
<span class="t" style="left:382.60px;top:537.71px;font-size:9.5px;transform:scaleX(1.0030);color:#e1e0e1">Mic/Aux</span>
<span class="t" style="left:548.67px;top:537.71px;font-size:9.5px;transform:scaleX(1.0705);color:#e1e0e1">-3.0</span>
<span class="t" style="left:567.68px;top:537.71px;font-size:9.5px;transform:scaleX(1.0561);color:#e1e0e1">dB</span>
<span class="t" style="left:619.74px;top:478.02px;font-size:11.5px;transform:scaleX(0.9597);color:#e1e0e1">Fade</span>
<span class="t" style="left:609.93px;top:526.02px;font-size:11.5px;transform:scaleX(0.9641);color:#e1e0e1">Duration</span>
<span class="t" style="left:659.54px;top:526.02px;font-size:11.5px;transform:scaleX(0.9080);color:#e1e0e1">300ms</span>
<span class="t" style="left:786.10px;top:477.02px;font-size:11.5px;transform:scaleX(1.0084);color:#e1e0e1">Start</span>
<span class="t" style="left:812.93px;top:477.02px;font-size:11.5px;transform:scaleX(0.9355);color:#e1e0e1">Streaming</span>
<span class="t" style="left:786.10px;top:500.02px;font-size:11.5px;transform:scaleX(1.0084);color:#e1e0e1">Start</span>
<span class="t" style="left:812.55px;top:500.02px;font-size:11.5px;transform:scaleX(0.9429);color:#e1e0e1">Recording</span>
<span class="t" style="left:794.24px;top:523.02px;font-size:11.5px;transform:scaleX(0.9209);color:#e1e0e1">Studio</span>
<span class="t" style="left:826.44px;top:523.02px;font-size:11.5px;transform:scaleX(0.9526);color:#e1e0e1">Mode</span>
<span class="t" style="left:804.02px;top:546.02px;font-size:11.5px;transform:scaleX(0.9507);color:#e1e0e1">Settings</span>
<span class="t" style="left:814.16px;top:569.02px;font-size:11.5px;transform:scaleX(1.0440);color:#e1e0e1">Exit</span>
<span class="t" style="left:522.24px;top:667.02px;font-size:11.5px;transform:scaleX(0.9542);color:#e1e0e1">LIVE:</span>
<span class="t" style="left:551.50px;top:667.02px;font-size:11.5px;transform:scaleX(0.9932);color:#e1e0e1">00:00:00</span>
<span class="t" style="left:620.33px;top:667.02px;font-size:11.5px;transform:scaleX(0.9647);color:#e1e0e1">REC:</span>
<span class="t" style="left:648.91px;top:667.02px;font-size:11.5px;transform:scaleX(0.9772);color:#e1e0e1">00:00:00</span>
<span class="t" style="left:718.05px;top:667.02px;font-size:11.5px;transform:scaleX(0.9225);color:#e1e0e1">CPU:</span>
<span class="t" style="left:746.62px;top:667.02px;font-size:11.5px;transform:scaleX(0.9745);color:#e1e0e1">1.6%,</span>
<span class="t" style="left:779.11px;top:667.02px;font-size:11.5px;transform:scaleX(0.9819);color:#e1e0e1">60.00</span>
<span class="t" style="left:811.32px;top:667.02px;font-size:11.5px;transform:scaleX(0.9184);color:#e1e0e1">fps</span>
</body></html>
